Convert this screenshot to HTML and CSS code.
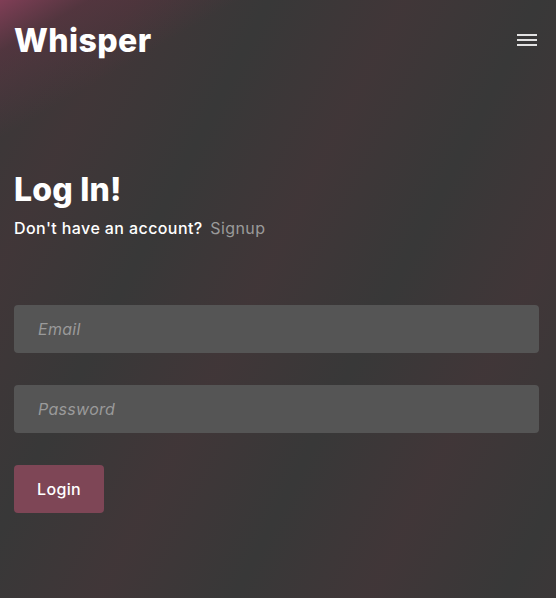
FILE: index.html
```html
<!DOCTYPE html>
<html lang="en">
<head>
<meta charset="utf-8">
<title>Whisper - Log In</title>
<link rel="stylesheet" href="styles.css">
</head>
<body>
<div class="page">
  <header class="topbar">
    <div class="brand">Whisper</div>
    <button class="menu" aria-label="Menu">
      <svg width="20" height="12" viewBox="0 0 20 12"><rect x="0" y="0" width="20" height="2" fill="#e2e2e2"/><rect x="0" y="5" width="20" height="2" fill="#e2e2e2"/><rect x="0" y="10" width="20" height="2" fill="#e2e2e2"/></svg>
    </button>
  </header>
  <main class="login">
    <h1 class="title">Log In!</h1>
    <p class="sub">Don't have an account? <a class="link" href="#">Signup</a></p>
    <form class="form">
      <input class="field" type="email" placeholder="Email">
      <input class="field" type="password" placeholder="Password">
      <button class="btn" type="button">Login</button>
    </form>
  </main>
</div>
</body>
</html>
```
FILE: styles.css
```css
html, body {
  margin: 0;
  height: 100%;
}
body {
  font-family: Inter, "Noto Sans", sans-serif;
  color: #fff;
  background-color: #383838;
  background-image:
    linear-gradient(150deg, rgba(128, 62, 86, 1) 0, rgba(100, 52, 68, 0.55) 45px, rgba(56, 56, 56, 0) 120px),
    repeating-linear-gradient(117deg, rgba(56,56,56,0) 0, rgba(70,53,56,0.6) 120px, rgba(56,56,56,0) 240px);
  overflow: hidden;
}
.page {
  padding: 0 17px 0 14px;
}
.topbar {
  display: flex;
  justify-content: space-between;
  align-items: center;
  height: 80px;
}
.brand {
  font-size: 32px;
  font-weight: 800;
  letter-spacing: 0.4px;
}
.menu {
  background: none;
  border: 0;
  padding: 0;
  margin-right: 2px;
  display: flex;
}
.login {
  padding-top: 90px;
}
.title {
  margin: 0;
  font-size: 32px;
  font-weight: 800;
  line-height: 40px;
  letter-spacing: 0.2px;
}
.sub {
  margin: 6px 0 0;
  font-size: 16px;
  font-weight: 500;
  line-height: 24px;
  letter-spacing: 0.4px;
}
.link {
  color: #9a9a9a;
  text-decoration: none;
  font-weight: 400;
  margin-left: 3px;
}
.form {
  display: flex;
  flex-direction: column;
  align-items: flex-start;
  gap: 32px;
  margin-top: 65px;
}
.field {
  box-sizing: border-box;
  width: 100%;
  height: 48px;
  border: 0;
  border-radius: 4px;
  background: #555555;
  padding: 0 24px;
  font-family: inherit;
  font-size: 16px;
  color: #fff;
  outline: none;
  letter-spacing: 0.3px;
}
.field::placeholder {
  color: #9a9a9a;
  font-style: italic;
}
.btn {
  height: 48px;
  width: 90px;
  border: 0;
  border-radius: 4px;
  background: #7e4656;
  color: #fff;
  font-family: inherit;
  font-size: 16px;
  font-weight: 500;
  padding: 0;
  letter-spacing: 0.3px;
}
```
